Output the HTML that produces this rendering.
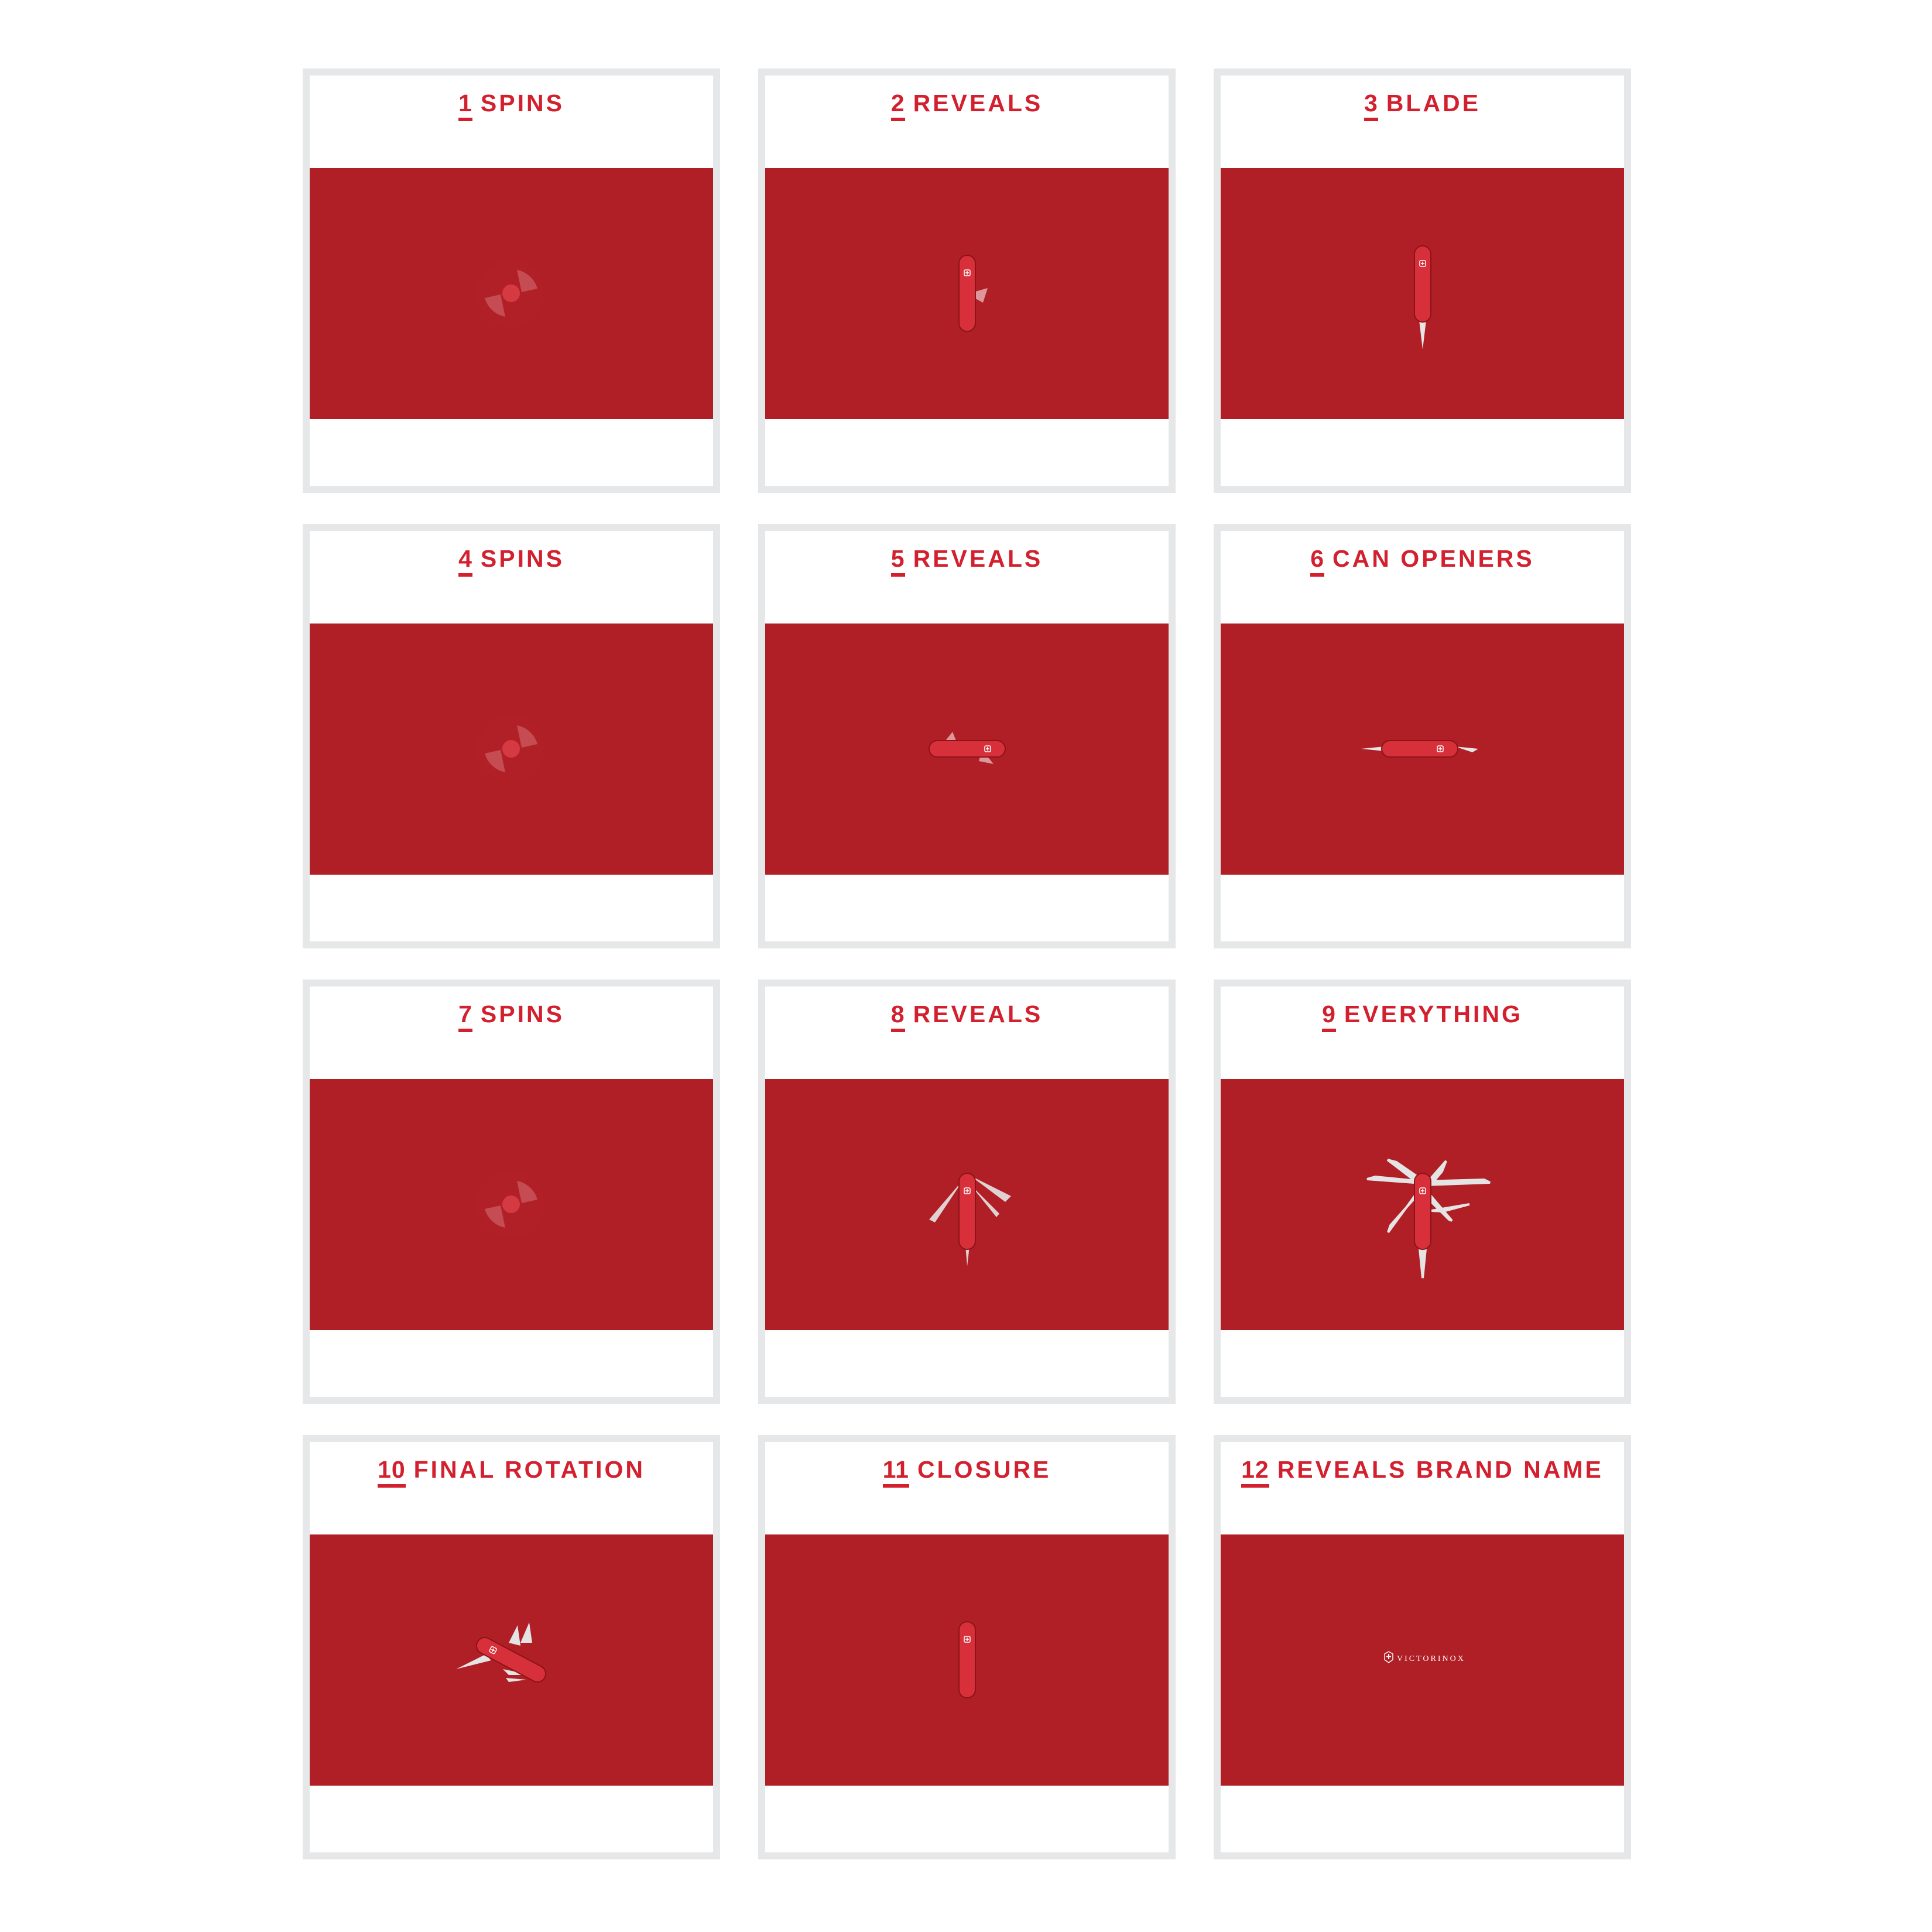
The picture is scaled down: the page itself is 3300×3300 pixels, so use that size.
<!DOCTYPE html>
<html><head><meta charset="utf-8"><style>
html,body{margin:0;padding:0;background:#fff;}
body{width:3300px;height:3300px;position:relative;overflow:hidden;}
.card{position:absolute;width:689px;height:701px;border:12px solid #e6e7e8;background:#fff;}
.t{position:absolute;left:0;right:0;top:24px;text-align:center;font-family:"Liberation Sans",sans-serif;font-weight:bold;font-size:41px;letter-spacing:4px;color:#d2202f;white-space:nowrap;}
.t u{text-decoration:none;border-bottom:6px solid #d2202f;padding-bottom:2px;margin-right:14px;letter-spacing:1px;}
.r{position:absolute;left:0;top:158px;width:689px;height:429px;background:#af1f25;}
.r svg{position:absolute;left:0;top:0;}
</style></head><body>
<svg width="0" height="0" style="position:absolute">
<defs>
<g id="k">
<rect x="-14" y="-65" width="28" height="130" rx="14" fill="#d8303a" stroke="#8c1318" stroke-width="2"/>
<rect x="-5" y="-40" width="10" height="10" rx="2" fill="none" stroke="#fff" stroke-width="1.5"/>
<path d="M0 -38v6M-3 -35h6" stroke="#fff" stroke-width="1.5"/>
</g>
<g id="spin">
<circle r="58" fill="#b2222a" opacity="0.6"/>
<path d="M10 -40 A45 45 0 0 1 45 -8 L18 -2 Z" fill="#e7a0a4" opacity="0.35"/>
<path d="M-10 40 A45 45 0 0 1 -45 8 L-18 2 Z" fill="#e7a0a4" opacity="0.35"/>
<circle r="15" fill="#d53a42"/>
</g>
</defs>
</svg>

<div class="card" style="left:517px;top:117px"><div class="t"><u>1</u>SPINS</div><div class="r"><svg width="689" height="429"><use href="#spin" x="344" y="214"/></svg></div></div>
<div class="card" style="left:1295px;top:117px"><div class="t"><u>2</u>REVEALS</div><div class="r"><svg width="689" height="429"><path d="M345 215 l35 -10 l-8 25 z" fill="#f1c9cb" opacity=".7"/><use href="#k" x="345" y="214"/></svg></div></div>
<div class="card" style="left:2073px;top:117px"><div class="t"><u>3</u>BLADE</div><div class="r"><svg width="689" height="429"><path d="M339 260 L351 260 L345 310 Z" fill="#e6e6e6"/><use href="#k" x="345" y="198"/></svg></div></div>

<div class="card" style="left:517px;top:895px"><div class="t"><u>4</u>SPINS</div><div class="r"><svg width="689" height="429"><use href="#spin" x="344" y="214"/></svg></div></div>
<div class="card" style="left:1295px;top:895px"><div class="t"><u>5</u>REVEALS</div><div class="r"><svg width="689" height="429"><path d="M300 210 l20 -25 l10 25z M370 215 l20 25 l-25 -5z" fill="#f1c9cb" opacity=".7"/><use href="#k" x="345" y="214" transform="rotate(90 345 214)"/></svg></div></div>
<div class="card" style="left:2073px;top:895px"><div class="t"><u>6</u>CAN OPENERS</div><div class="r"><svg width="689" height="429"><path d="M240 214 l40 -4 v8 z M400 210 l40 4 l-10 6 z" fill="#e6e6e6"/><use href="#k" x="340" y="214" transform="rotate(90 340 214)"/></svg></div></div>

<div class="card" style="left:517px;top:1673px"><div class="t"><u>7</u>SPINS</div><div class="r"><svg width="689" height="429"><use href="#spin" x="344" y="214"/></svg></div></div>
<div class="card" style="left:1295px;top:1673px"><div class="t"><u>8</u>REVEALS</div><div class="r"><svg width="689" height="429"><path d="M340 170 L280 240 L290 245 Z M350 165 L420 200 L410 210 Z M350 180 L400 230 L395 236 Z M340 260 L352 260 L345 320 Z" fill="#e6e6e6" opacity=".9"/><use href="#k" x="345" y="226"/></svg></div></div>
<div class="card" style="left:2073px;top:1673px"><div class="t"><u>9</u>EVERYTHING</div><div class="r"><svg width="689" height="429"><path d="M345 178 L250 171 L264 167 L345 175Z M345 175 L450 172 L460 177 L350 181Z M340 180 L285 138 L300 142 L348 175Z M350 180 L385 140 L378 158 L355 185Z M332 199 L286 262 L290 250 L330 205Z M355 195 L395 242 L390 240 L352 202Z M360 225 L425 214 L380 226 Z M340 290 L350 290 L345 340Z" fill="#e4e4e4" stroke="#e4e4e4" stroke-width="4"/><use href="#k" x="345" y="226"/></svg></div></div>

<div class="card" style="left:517px;top:2451px"><div class="t"><u>10</u>FINAL ROTATION</div><div class="r"><svg width="689" height="429"><path d="M310 215 L250 230 L300 205Z M360 185 L375 150 L380 185Z M340 185 L355 155 L360 190Z M330 230 L380 240 L340 240Z M335 245 L370 248 L340 252Z" fill="#e4e4e4"/><use href="#k" x="344" y="214" transform="rotate(-62 344 214)"/></svg></div></div>
<div class="card" style="left:1295px;top:2451px"><div class="t"><u>11</u>CLOSURE</div><div class="r"><svg width="689" height="429"><use href="#k" x="345" y="214"/></svg></div></div>
<div class="card" style="left:2073px;top:2451px"><div class="t"><u>12</u>REVEALS BRAND NAME</div><div class="r"><svg width="689" height="429"><path d="M280 204 l7 -4 l7 4 v10 l-7 5 l-7 -5z" fill="none" stroke="#fff" stroke-width="1.4"/><path d="M287 204v9M283 208.5h8" stroke="#fff" stroke-width="2"/><text x="301" y="216" fill="#fff" font-family="Liberation Serif,serif" font-size="14" letter-spacing="3">VICTORINOX</text></svg></div></div>
</body></html>
